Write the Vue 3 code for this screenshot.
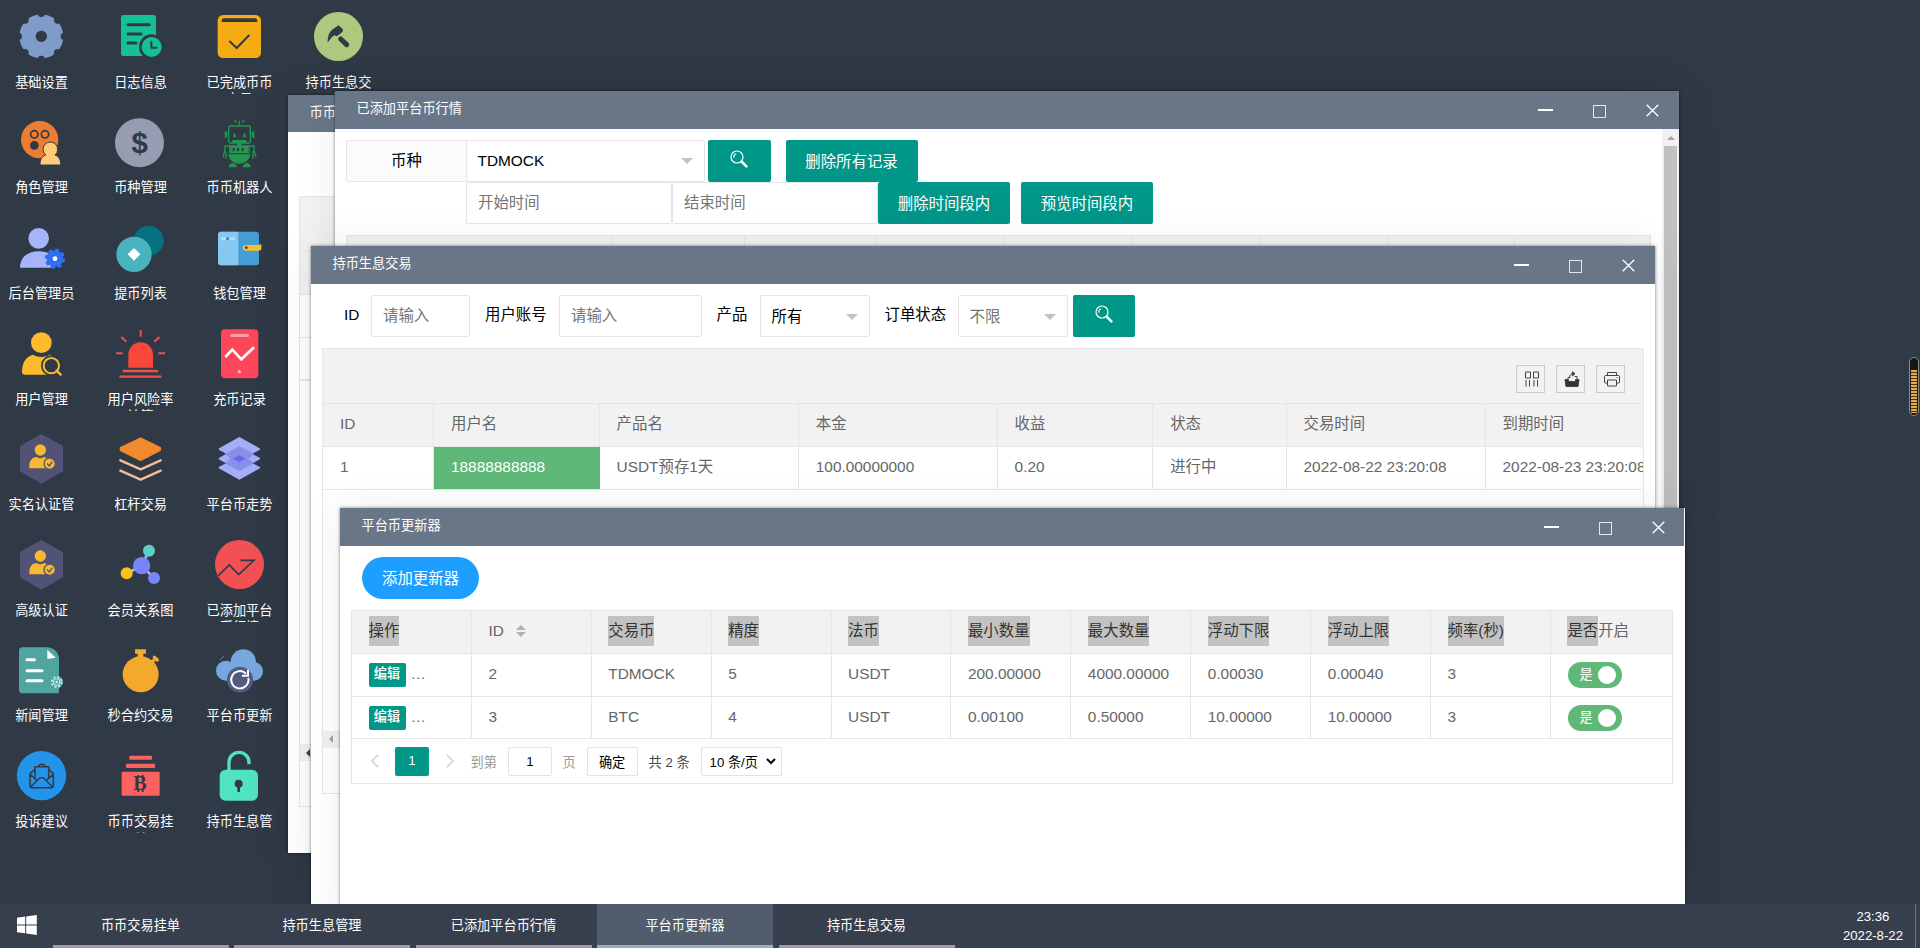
<template>
  <div class="desktop">
    <!-- 桌面图标 -->
    <div class="shortcuts">
      <div v-for="item in shortcuts" :key="item.name" class="shortcut">
        <svg class="shortcut-icon" viewBox="0 0 147 147" v-html="item.svg"></svg>
        <div class="shortcut-name">{{ item.name }}</div>
      </div>
    </div>

    <!-- 币币交易挂单 -->
    <section class="window win-orders">
      <header class="win-title">币币交易挂单</header>
      <div class="win-body orders-body">
        <div class="grid-box orders-grid">
          <div class="orders-tool"></div>
          <div class="orders-head"></div>
          <div class="orders-row"></div>
          <div class="orders-row last"></div>
          <div class="orders-space"></div>
          <div class="hscroll dark"><i></i></div>
        </div>
      </div>
    </section>

    <!-- 已添加平台币行情 -->
    <section class="window win-market">
      <header class="win-title">
        <span>已添加平台币行情</span>
        <span class="win-ctrl"><i class="min"></i><i class="max"></i><svg class="close" viewBox="0 0 13 13"><path d="M.7.7l11.6 11.6M12.3.7L.7 12.3" /></svg></span>
      </header>
      <div class="win-body market-body">
        <div class="market-main">
          <div class="market-row">
            <div class="pane-label">币种</div>
            <div class="select-box market-select">TDMOCK<i class="caret"></i></div>
            <button class="btn btn-search"><svg viewBox="0 0 18 18"><circle cx="7" cy="7" r="6" /><path d="M4 7.6a3.2 3.2 0 0 1 2.2-3.8" /><path class="handle" d="M12 12l4.4 4.4" /></svg></button>
            <button class="btn btn-all">删除所有记录</button>
          </div>
          <div class="market-row second">
            <input class="text-input" placeholder="开始时间" />
            <input class="text-input" placeholder="结束时间" />
            <button class="btn">删除时间段内</button>
            <button class="btn btn-preview">预览时间段内</button>
          </div>
          <div class="grid-box market-grid">
            <div v-for="(w, i) in marketCols" :key="i" class="market-cell" :style="{ width: w + 'px' }"></div>
          </div>
        </div>
        <div class="vscroll"><i></i><b></b></div>
      </div>
    </section>

    <!-- 持币生息交易 -->
    <section class="window win-trade">
      <header class="win-title">
        <span>持币生息交易</span>
        <span class="win-ctrl"><i class="min"></i><i class="max"></i><svg class="close" viewBox="0 0 13 13"><path d="M.7.7l11.6 11.6M12.3.7L.7 12.3" /></svg></span>
      </header>
      <div class="win-body trade-body">
        <div class="trade-form">
          <label class="l-id">ID</label>
          <input class="text-input w-id" placeholder="请输入" />
          <label class="l-user">用户账号</label>
          <input class="text-input w-user" placeholder="请输入" />
          <label class="l-product">产品</label>
          <div class="select-box">所有<i class="caret"></i></div>
          <label class="l-status">订单状态</label>
          <div class="select-box muted">不限<i class="caret"></i></div>
          <button class="btn btn-search"><svg viewBox="0 0 18 18"><circle cx="7" cy="7" r="6" /><path d="M4 7.6a3.2 3.2 0 0 1 2.2-3.8" /><path class="handle" d="M12 12l4.4 4.4" /></svg></button>
        </div>
        <div class="grid-box trade-grid">
          <div class="trade-tool">
            <span class="tool"><svg viewBox="0 0 16 16"><path d="M1.5 1h5v6h-5zM9.5 1h5v6h-5zM2 9v6.5M5.5 9v6.5M10 9v6.5M13.5 9v6.5" /></svg></span>
            <span class="tool"><svg viewBox="0 0 16 16"><path class="solid" d="M1 8.5h3.5v2h7v-2H15L14 15.5H2z" /><path d="M4 8V6.5h2.500M13 8V5.500h-2.500M5.500 6.500C5.500 4 7 3 9 2.800" /><path class="solid" d="M8.300.6L11 2.800 8.300 5z" /></svg></span>
            <span class="tool"><svg viewBox="0 0 16 16"><path d="M3.500 4.500v-3h9v3M3.500 12H1.500c-.6 0-1-.4-1-1V6c0-1 .5-1.500 1.500-1.500h12c1 0 1.500.5 1.500 1.500v5c0 .6-.4 1-1 1h-2M3.500 9h9v6h-9zM12.500 6.700h1" /></svg></span>
          </div>
          <div class="tr th">
            <div v-for="col in tradeCols" :key="col.title" class="td" :style="{ width: col.width + 'px' }">{{ col.title }}</div>
          </div>
          <div class="tr">
            <div v-for="col in tradeCols" :key="col.title" class="td" :class="{ green: col.green }" :style="{ width: col.width + 'px' }">{{ col.value }}</div>
          </div>
          <div class="trade-space"></div>
          <div class="hscroll"><i></i></div>
        </div>
      </div>
    </section>

    <!-- 平台币更新器 -->
    <section class="window win-updater">
      <header class="win-title">
        <span>平台币更新器</span>
        <span class="win-ctrl"><i class="min"></i><i class="max"></i><svg class="close" viewBox="0 0 13 13"><path d="M.7.7l11.6 11.6M12.3.7L.7 12.3" /></svg></span>
      </header>
      <div class="win-body updater-body">
        <button class="btn btn-add">添加更新器</button>
        <div class="grid-box updater-grid">
          <div class="tr th">
            <div class="td"><span class="sel">操作</span></div>
            <div class="td">ID<span class="sort"><i class="asc"></i><i class="desc"></i></span></div>
            <div v-for="t in updaterCols" :key="t" class="td"><span class="sel">{{ t }}</span></div>
            <div class="td"><span class="sel">是否</span>开启</div>
          </div>
          <div v-for="row in updaterRows" :key="row[0]" class="tr">
            <div class="td"><span class="btn-edit">编辑</span><span class="dots">…</span></div>
            <div v-for="(v, i) in row" :key="i" class="td">{{ v }}</div>
            <div class="td"><span class="switch">是<i></i></span></div>
          </div>
          <div class="pager">
            <svg class="arrow" viewBox="0 0 8 14"><path d="M7.200.8L1 7l6.200 6.200" /></svg>
            <span class="page-cur">1</span>
            <svg class="arrow next" viewBox="0 0 8 14"><path d="M.8.8L7 7 .8 13.200" /></svg>
            <span class="skip">到第</span>
            <input class="page-input" value="1" />
            <span class="page-word">页</span>
            <button class="page-btn">确定</button>
            <span class="page-count">共 2 条</span>
            <span class="page-limit">10 条/页<svg viewBox="0 0 10 7"><path d="M1 1l4 4 4-4" /></svg></span>
          </div>
        </div>
      </div>
    </section>

    <!-- 侧边挂件 -->
    <div class="gauge"><i></i></div>

    <!-- 任务栏 -->
    <footer class="taskbar">
      <div class="start">
        <svg viewBox="0 0 20 20"><path d="M0 2.700L8.200 1.600v7.900H0zM9.200 1.450L19.800 0v9.500H9.200zM0 10.400h8.200v7.900L0 17.200zM9.200 10.400h10.600v9.500L9.200 18.450z" /></svg>
      </div>
      <div v-for="t in tasks" :key="t" class="task" :class="{ active: t === activeTask }">{{ t }}</div>
      <div class="clock">
        <div>23:36</div>
        <div>2022-8-22</div>
      </div>
      <div class="show-desktop"></div>
    </footer>
  </div>
</template>

<script setup>
import { ref } from 'vue'

const bg = '#303946'

// 认证图标，两处共用
const certIcon = `<path fill="#515276" d="M73 0l65 36v76l-65 37-64-37V36z"/>
  <circle cx="70" cy="48" r="17" fill="#f9b92f"/>
  <path fill="#f9b92f" d="M37 103v-8c0-16 11-26 22-26 7 5 15 5 22 0 9 1 17 9 19 18v16z"/>
  <circle cx="98" cy="89" r="17" fill="#f9b92f" stroke="#515276" stroke-width="4"/>
  <path d="M90 88l7 8 9-13" fill="none" stroke="#515276" stroke-width="4"/>`

// 齿轮边缘的缺口
const gearNotches = (cx, cy, r, n, size, color) =>
  Array.from({ length: n }, (_, i) => {
    const a = (i * 2 * Math.PI) / n - Math.PI / 2
    return `<circle cx="${(cx + r * Math.cos(a)).toFixed(1)}" cy="${(cy + r * Math.sin(a)).toFixed(1)}" r="${size}" fill="${color}"/>`
  }).join('')

const shortcuts = [
  {
    name: '基础设置',
    svg: `<circle cx="73" cy="73" r="66" fill="#7f9bca"/>${gearNotches(73, 73, 69, 8, 11, bg)}<circle cx="73" cy="73" r="17" fill="${bg}"/>`
  },
  {
    name: '角色管理',
    svg: `<circle cx="68" cy="65" r="56" fill="#ed7d31"/>
      <g fill="none" stroke="${bg}" stroke-width="5"><circle cx="52" cy="49" r="11"/><circle cx="84" cy="49" r="11"/></g>
      <circle cx="52" cy="82" r="13" fill="${bg}"/>
      <path fill="#ffca7a" stroke="${bg}" stroke-width="3" d="M69 141c0-15 4-25 17-30a22 22 0 1 1 28 0c13 5 17 15 17 30z"/>`
  },
  {
    name: '后台管理员',
    svg: `<circle cx="65" cy="46" r="31" fill="#a5b4fb"/>
      <path fill="#a5b4fb" d="M9 134c0-32 24-49 56-49 14 0 28 3 37 10v39z"/>
      <circle cx="114" cy="107" r="25" fill="#2e6ff2"/>
      <circle cx="114" cy="107" r="26" fill="none" stroke="#2e6ff2" stroke-width="9" stroke-dasharray="11.400 9"/>
      <circle cx="114" cy="107" r="7" fill="#fff"/>`
  },
  {
    name: '用户管理',
    svg: `<circle cx="73" cy="41" r="31" fill="#fcbb2d"/>
      <path fill="#fcbb2d" d="M15 130c0-32 14-48 33-53 16 9 34 9 50 0 12 3 22 12 26 26v34H24c-6 0-9-2-9-7z"/>
      <circle cx="103" cy="110" r="24" fill="${bg}" stroke="${bg}" stroke-width="14"/><path d="M118 126l16 17" stroke="${bg}" stroke-width="18"/>
      <circle cx="103" cy="110" r="23" fill="none" stroke="#fcbb2d" stroke-width="6"/><path d="M119 125l12 12" stroke="#fcbb2d" stroke-width="7" stroke-linecap="round"/>`
  },
  { name: '实名认证管理', svg: certIcon },
  { name: '高级认证', svg: certIcon },
  {
    name: '新闻管理',
    svg: `<path fill="#51a5a1" d="M16 4h74c20 0 36 16 36 36v92l-1 10H16c-6 0-10-4-10-10V14C6 8 10 4 16 4z"/>
      <path fill="#fff" d="M91 11l25 24-25 4z"/>
      <path d="M30 41h22M30 74h45M30 104h45" stroke="#fff" stroke-width="9" stroke-linecap="round"/>
      <circle cx="119" cy="108" r="19" fill="#51a5a1"/>
      <circle cx="119" cy="108" r="15" fill="none" stroke="#d8f0ee" stroke-width="5" stroke-dasharray="6 5.800"/><circle cx="119" cy="108" r="10" fill="none" stroke="#d8f0ee" stroke-width="3"/><circle cx="119" cy="108" r="4" fill="#d8f0ee"/>`
  },
  {
    name: '投诉建议',
    svg: `<circle cx="73.5" cy="74" r="74" fill="#2493ea"/>
      <g fill="none" stroke="${bg}" stroke-width="4.500" stroke-linejoin="round"><path d="M54 55L39 68v37c0 3 2 5 5 5h60c3 0 5-2 5-5V68L95 55M39 70l20 17M109 70L89 87M41 108l24-24c5-5 13-5 18 0l24 24"/><path d="M54 84V47h41v37M65 46c2-8 17-8 19 0"/></g>`
  },
  {
    name: '日志信息',
    svg: `<rect x="15" y="9" width="105" height="123" rx="7" fill="#14c197"/>
      <path d="M36 38h64M36 66h39M36 93h24" stroke="${bg}" stroke-width="9" stroke-linecap="round"/>
      <circle cx="107" cy="105" r="38" fill="${bg}"/><circle cx="107" cy="105" r="30" fill="#14c197"/>
      <path d="M106 86v21h18" fill="none" stroke="${bg}" stroke-width="6"/>`
  },
  {
    name: '币种管理',
    svg: `<circle cx="70.500" cy="74" r="73.500" fill="#969db0"/>
      <text x="71" y="104" text-anchor="middle" font-family="Liberation Sans, sans-serif" font-weight="bold" font-size="88" fill="${bg}">$</text>`
  },
  {
    name: '提币列表',
    svg: `<circle cx="98" cy="53" r="45" fill="#05707e"/><circle cx="54" cy="94" r="53" fill="#49b4bf"/>
      <path fill="#fff" d="M54 75l19 19-19 19-19-19z"/>`
  },
  {
    name: '用户风险率计算',
    svg: `<path fill="#fa473b" d="M37 116V77a37 37 0 0 1 74 0v39z"/>
      <path d="M20 126h106M10 143h126" stroke="#ee5148" stroke-width="7"/>
      <path d="M74 3v20M16 24l15 14M130 24l-15 14M0 73h20M127 73h20" stroke="#e8505a" stroke-width="6"/>`
  },
  {
    name: '杠杆交易',
    svg: `<path fill="#f08a2c" d="M74 13l58 29v6l-58 30-60-30v-6z" stroke="#f08a2c" stroke-width="6" stroke-linejoin="round"/>
      <path d="M13 79l61 27 60-27M13 110l61 27 60-27" fill="none" stroke="#f7bd97" stroke-width="7" stroke-linecap="round" stroke-linejoin="round"/>`
  },
  {
    name: '会员关系图',
    svg: `<path d="M99 32L77 77l-45 23M77 77l37 37" stroke="#aab6ee" stroke-width="8" fill="none"/>
      <circle cx="77" cy="77" r="26" fill="#7785fb"/><circle cx="99" cy="32" r="18" fill="#5dcfc8"/>
      <circle cx="32" cy="100" r="18" fill="#fac116"/><circle cx="114" cy="114" r="18" fill="#7785fb"/>`
  },
  {
    name: '秒合约交易',
    svg: `<circle cx="74" cy="85" r="54" fill="#f3a92b"/>
      <path fill="#f3a92b" d="M57 10h33v13h-8v14H65V23h-8z"/><path d="M103 52l16-14" stroke="#f3a92b" stroke-width="10"/><path d="M115 34l9 8" stroke="#f3a92b" stroke-width="10" stroke-linecap="round"/>`
  },
  {
    name: '币币交易挂单',
    svg: `<g fill="#fc6262"><rect x="40" y="14" width="68" height="12" rx="3"/><rect x="30" y="38" width="87" height="13" rx="3"/><rect x="17" y="62" width="114" height="72" rx="3"/></g>
      <path d="M67 72v8M80 72v8M67 114v9M80 114v9" stroke="${bg}" stroke-width="6"/>
      <text x="72" y="117" text-anchor="middle" font-family="Liberation Serif, serif" font-weight="bold" font-size="60" fill="${bg}">B</text>`
  },
  {
    name: '已完成币币交易',
    svg: `<rect x="8" y="9" width="130" height="129" rx="16" fill="#f5ac12"/>
      <path fill="${bg}" d="M20 30v-4c0-4 3-7 7-7h93c4 0 7 3 7 7v4z"/>
      <path d="M43 87l22 21 38-39" fill="none" stroke="${bg}" stroke-width="6"/>`
  },
  {
    name: '币币机器人',
    svg: `<g fill="none" stroke="#22974f" stroke-width="4"><rect x="41" y="24" width="65" height="51" rx="5"/><path d="M73 23V8M64 14l-5-8M82 14l5-8M31 40v20M116 40v20M35 42v16M112 42v16M30 84h87M44 84v20h58V84M30 82v14l-6 22M117 82v14l6 22M33 100v22M114 100v22"/></g>
      <g fill="#22974f"><rect x="55" y="47" width="7" height="11"/><rect x="85" y="47" width="7" height="11"/><path d="M52 66h42v9H52zM66 76h14v9H66zM46 84h54v20H46z"/><path d="M40 109h66c-4 19-16 28-33 28s-29-9-33-28z"/><path d="M40 148c2-8 8-13 14-13s10 5 12 13zM82 148c2-8 8-13 14-13s10 5 12 13z"/></g>
      <path d="M53 90h6v10h-6zM66 90h6v10h-6zM80 90h6v10h-6z" fill="${bg}"/>`
  },
  {
    name: '钱包管理',
    svg: `<rect x="9" y="26" width="123" height="101" rx="9" fill="#459dd6"/>
      <path fill="#87c8f0" d="M18 26h52v101H18c-5 0-9-4-9-9V35c0-5 4-9 9-9z"/>
      <path d="M22 47h34" stroke="#b5e0fa" stroke-width="9" stroke-linecap="round"/><circle cx="38" cy="47" r="5" fill="#4b7fb0"/>
      <path fill="#fbbf2c" d="M92 66h40l7-3v17l-7 3H92a8 8 0 0 1 0-17z"/><circle cx="94" cy="74" r="4" fill="${bg}"/>`
  },
  {
    name: '充币记录',
    svg: `<rect x="18" y="1" width="112" height="147" rx="12" fill="#fd4659"/>
      <rect x="46" y="15" width="56" height="9" rx="4" fill="#ffa0aa"/>
      <path d="M31 84l21-22 27 29 38-36" fill="none" stroke="#fff" stroke-width="8"/><circle cx="73" cy="128" r="5" fill="#ffb3bb"/>`
  },
  {
    name: '平台币走势',
    svg: `<g fill="#a4adf7" stroke="#a4adf7" stroke-width="6" stroke-linejoin="round"><path d="M73 70l59 31-59 33-59-33zM73 42l59 32-59 32-59-32zM73 12l59 33-59 32-59-32z"/></g>
      <path fill="#8790e6" d="M73 37l44 22-17 15 17 14-44 23-44-23 17-14-17-15z"/><path fill="#626bf0" d="M73 64l19 10-19 10-19-10z"/>`
  },
  {
    name: '已添加平台币行情',
    svg: `<circle cx="73.500" cy="73.500" r="73.500" fill="#f25153"/>
      <path d="M10 107l33-32 28 29 46-43H76" fill="none" stroke="${bg}" stroke-width="5"/>`
  },
  {
    name: '平台币更新器',
    svg: `<g fill="#76a7df"><circle cx="85" cy="48" r="38"/><circle cx="33" cy="74" r="30"/><circle cx="116" cy="76" r="28"/><path d="M33 50h80v54H33z"/></g>
      <path d="M14 42l14-12" stroke="#76a7df" stroke-width="2"/>
      <circle cx="75" cy="101" r="39" fill="#525b80"/>
      <path d="M100 96a26 26 0 1 1-7-13M99 71v18H81" fill="none" stroke="#fff" stroke-width="6"/>`
  },
  {
    name: '持币生息管理',
    svg: `<rect x="14" y="56" width="115" height="93" rx="18" fill="#4fe3c1"/>
      <path d="M42 60V34a30 30 0 0 1 60 0v6" fill="none" stroke="#4fe3c1" stroke-width="10"/>
      <circle cx="71" cy="98" r="12" fill="${bg}"/><path d="M71 100v20" stroke="${bg}" stroke-width="8" stroke-linecap="round"/>`
  },
  {
    name: '持币生息交易',
    svg: `<circle cx="73.500" cy="73.500" r="73.500" fill="#aec97f"/>
      <path fill="${bg}" d="M41 92c0-18 4-32 16-41l17-11 13 12-1 7-17 14-8-3c-9 6-14 14-20 22z"/>
      <path d="M80 81l18 17" stroke="${bg}" stroke-width="15" stroke-linecap="round"/><path d="M66 80l20-18" stroke="#aec97f" stroke-width="4"/>`
  }
]

// 行情表各列宽度
const marketCols = [265.4, 132.4, 132.6, 128, 127.6, 127.4, 127.5, 127.6, 132.5]

const tradeCols = [
  { title: 'ID', value: '1', width: 111 },
  { title: '用户名', value: '18888888888', width: 165.6, green: true },
  { title: '产品名', value: 'USDT预存1天', width: 199.2 },
  { title: '本金', value: '100.00000000', width: 198.8 },
  { title: '收益', value: '0.20', width: 155.6 },
  { title: '状态', value: '进行中', width: 133.4 },
  { title: '交易时间', value: '2022-08-22 23:20:08', width: 199 },
  { title: '到期时间', value: '2022-08-23 23:20:08', width: 199 }
]

const updaterCols = ['交易币', '精度', '法币', '最小数量', '最大数量', '浮动下限', '浮动上限', '频率(秒)']
const updaterRows = [
  ['2', 'TDMOCK', '5', 'USDT', '200.00000', '4000.00000', '0.00030', '0.00040', '3'],
  ['3', 'BTC', '4', 'USDT', '0.00100', '0.50000', '10.00000', '10.00000', '3']
]

const tasks = ['币币交易挂单', '持币生息管理', '已添加平台币行情', '平台币更新器', '持币生息交易']
const activeTask = ref('平台币更新器')
</script>

<style>
body {
  margin: 0;
  overflow: hidden;
}
</style>

<style scoped>
.desktop {
  position: relative;
  width: 1920px;
  height: 948px;
  overflow: hidden;
  background: #303946;
  font-family: "Liberation Sans", "Noto Sans CJK SC", sans-serif;
  font-size: 15.4px;
  color: #666;
}

.desktop * {
  box-sizing: border-box;
}

button,
input {
  font-family: inherit;
  font-size: 15.4px;
  margin: 0;
}

/* 桌面图标 */
.shortcuts {
  display: grid;
  grid-auto-flow: column;
  grid-template-rows: repeat(8, 105.6px);
  grid-auto-columns: 99px;
  justify-content: start;
  padding-top: 12px;
  margin-left: -8px;
}

.shortcut {
  display: flex;
  flex-direction: column;
  align-items: center;
}

.shortcut-icon {
  width: 49px;
  height: 49px;
  flex-shrink: 0;
  overflow: visible;
}

.shortcut-name {
  width: 70px;
  height: 20px;
  margin-top: 12.800px;
  overflow: hidden;
  text-align: center;
  font-size: 13.2px;
  line-height: 17.600px;
  color: #fff;
}

/* 窗口 */
.window {
  position: absolute;
  display: flex;
  flex-direction: column;
  background: #fff;
  box-shadow: 0 0 3px rgba(0, 0, 0, 0.5), 1px 1px 40px rgba(0, 0, 0, 0.08);
}

.win-title {
  display: flex;
  justify-content: space-between;
  height: 38px;
  flex-shrink: 0;
  padding-left: 21.500px;
  background: #687688;
  color: #fff;
  font-size: 13.2px;
  line-height: 36px;
  white-space: nowrap;
  overflow: hidden;
}

.win-ctrl {
  display: flex;
  align-items: center;
  gap: 40px;
  padding-right: 20px;
}

.win-ctrl .min {
  width: 15px;
  height: 2px;
  background: #fff;
}

.win-ctrl .max {
  width: 13px;
  height: 13px;
  margin-top: 2px;
  border: 1px solid #e3e8ee;
}

.win-ctrl .close {
  width: 13px;
  height: 13px;
  margin-top: 1px;
  fill: none;
  stroke: #fff;
  stroke-width: 1.3;
}

.win-body {
  flex: 1;
  min-height: 0;
  overflow: hidden;
}

.grid-box {
  border: 1px solid #e6e6e6;
}

.win-orders {
  left: 288px;
  top: 95px;
  width: 1344px;
  height: 758px;
}

.win-orders .win-title {
  height: 37px;
}

.orders-body {
  padding: 64px 11px 0;
}

.orders-tool {
  height: 55px;
  background: #f2f2f2;
  border-bottom: 1px solid #e6e6e6;
}

.orders-head {
  height: 43px;
  background: #f2f2f2;
  border-bottom: 1px solid #e6e6e6;
}

.orders-row {
  height: 43px;
  border-bottom: 1px solid #e6e6e6;
}

.orders-row.last {
  border-bottom-width: 2px;
}

.orders-space {
  height: 363px;
}

.orders-grid {
  height: 611px;
}

.hscroll {
  height: 17px;
  background: #f1f1f1;
  display: flex;
  align-items: center;
}

.hscroll i {
  margin-left: 6px;
  border: 4px solid transparent;
  border-left: 0;
  border-right-color: #a3a3a3;
}

.hscroll.dark i {
  border-right-color: #404040;
}

.win-market {
  left: 335px;
  top: 91px;
  width: 1344px;
  height: 760px;
}

.market-body {
  display: flex;
}

.market-main {
  flex: 1;
  min-width: 0;
  padding: 11px 0 0 11px;
}

.market-row {
  display: flex;
  height: 42px;
}

.market-row.second {
  padding-left: 120px;
}

.pane-label {
  width: 121px;
  border: 1px solid #e6e6e6;
  border-radius: 2px 0 0 2px;
  background: #fbfbfb;
  color: #000;
  text-align: center;
  line-height: 40px;
}

.select-box {
  display: flex;
  align-items: center;
  justify-content: space-between;
  width: 110px;
  height: 42px;
  padding: 0 11px 0 10.500px;
  border: 1px solid #e6e6e6;
  border-radius: 2px;
  background: #fff;
  color: #000;
}

.select-box.muted {
  color: #757575;
}

.market-select {
  width: 239px;
  margin: 0 3px 0 -1px;
}

.trade-form .select-box {
  padding-top: 2px;
}

.caret {
  border: 6.600px solid transparent;
  border-top-color: #c2c2c2;
  border-bottom: 0;
}

.text-input {
  width: 206px;
  height: 42px;
  padding: 0 0 0 11px;
  border: 1px solid #e6e6e6;
  border-radius: 2px;
  outline: none;
  background: #fff;
}

.text-input::placeholder {
  color: #757575;
  opacity: 1;
}

.btn {
  width: 132px;
  height: 42px;
  padding: 0 0 2px;
  border: 0;
  border-radius: 2px;
  background: #009688;
  color: #fff;
  white-space: nowrap;
}

.btn-search {
  width: 62.500px;
}

.trade-form .btn-search {
  width: 62px;
}

.btn-search svg {
  width: 18px;
  height: 18px;
  margin-bottom: 3px;
  vertical-align: middle;
  fill: none;
  stroke: #fff;
  stroke-width: 1.2;
}

.btn-search .handle {
  stroke-width: 2.6;
  stroke-linecap: round;
}

.btn-all {
  margin-left: 15px;
}

.btn-preview {
  margin-left: 11px;
}

.market-grid {
  display: flex;
  width: 1304.500px;
  height: 500px;
  margin-top: 11px;
  background: #f2f2f2;
}

.market-cell {
  flex-shrink: 0;
  border-right: 1px solid #e6e6e6;
}

.market-cell:last-child {
  border-right: 0;
}

.vscroll {
  display: flex;
  flex-direction: column;
  align-items: center;
  width: 17px;
  background: #f1f1f1;
}

.vscroll i {
  margin: 7px 0 6px;
  border: 4px solid transparent;
  border-top: 0;
  border-bottom-color: #a3a3a3;
}

.vscroll b {
  width: 13px;
  height: 600px;
  background: #c1c1c1;
}

.win-trade {
  left: 311px;
  top: 246px;
  width: 1344px;
  height: 690px;
}

.trade-body {
  padding: 11px 11px 0;
}

.trade-form {
  display: flex;
  height: 42px;
  line-height: 40px;
  color: #000;
}

.trade-form .w-id {
  width: 99px;
}

.trade-form .w-user {
  width: 143px;
}

.l-id {
  width: 49px;
  padding-left: 22px;
}

.l-user {
  width: 89px;
  padding-left: 15px;
}

.l-product {
  width: 58px;
  padding-left: 14.500px;
}

.l-status {
  width: 88px;
  padding-left: 14.500px;
}

.trade-form .btn {
  margin-left: 5px;
}

.trade-grid {
  width: 1322px;
  height: 446px;
  margin-top: 11px;
  overflow: hidden;
}

.trade-tool {
  display: flex;
  justify-content: flex-end;
  align-items: center;
  gap: 11px;
  height: 55px;
  padding: 5px 18px 0 0;
  background: #f2f2f2;
  border-bottom: 1px solid #e6e6e6;
}

.tool {
  display: flex;
  align-items: center;
  justify-content: center;
  width: 29px;
  height: 28px;
  padding-left: 2px;
  border: 1px solid #ccc;
}

.tool svg {
  width: 16px;
  height: 16px;
  fill: none;
  stroke: #444;
  stroke-width: 1;
}

.tool .solid {
  fill: #333;
}

.tr {
  display: flex;
  height: 43px;
  border-bottom: 1px solid #e6e6e6;
}

.th {
  background: #f2f2f2;
}

.td {
  flex-shrink: 0;
  padding: 0 0 0 17px;
  border-right: 1px solid #e6e6e6;
  line-height: 40px;
  white-space: nowrap;
}

.td.green {
  background: #5fb878;
  border-right-color: #5fb878;
  color: #fff;
}

.trade-space {
  height: 240.500px;
}

.win-updater {
  left: 340px;
  top: 508px;
  width: 1345px;
  height: 420px;
}

.win-updater .win-title {
  margin-right: 1px;
}

.win-updater .win-ctrl {
  padding-right: 19px;
}

.updater-body {
  padding: 11px;
}

.btn-add {
  display: block;
  width: 117px;
  margin-left: 11px;
  border-radius: 21px;
  background: #1e9fff;
}

.updater-grid {
  width: 1322px;
  margin-top: 11px;
}

.updater-grid .td {
  display: flex;
  align-items: center;
  width: 119.900px;
  padding-left: 16.500px;
  padding-bottom: 3px;
  line-height: 30px;
}

.updater-grid .td:last-child {
  border-right: 0;
}

.updater-grid .tr:not(.th) .td {
  padding-bottom: 2px;
}

.updater-grid .tr:nth-child(3) {
  height: 42px;
}

.updater-grid .tr:nth-child(3) .td {
  padding-bottom: 1px;
}

.sel {
  height: 30px;
  background: #c2c2c2;
  color: #333;
}

.sort {
  display: flex;
  flex-direction: column;
  gap: 2px;
  margin-left: 12px;
}

.sort i {
  border: 5.500px solid transparent;
}

.sort .asc {
  border-top: 0;
  border-bottom-color: #b2b2b2;
}

.sort .desc {
  border-bottom: 0;
  border-top-color: #b2b2b2;
}

.btn-edit {
  width: 37px;
  height: 24px;
  margin-top: 1px;
  border-radius: 2px;
  background: #009688;
  color: #fff;
  font-size: 13.2px;
  font-weight: 500;
  line-height: 22px;
  text-align: center;
}

.dots {
  margin-left: 5px;
}

.switch {
  display: flex;
  align-items: center;
  justify-content: space-between;
  width: 54px;
  height: 26px;
  margin: 2px 0 0 1px;
  padding: 0 6px 0 11px;
  border-radius: 13px;
  background: #5fb878;
  color: #fff;
  font-size: 13.2px;
}

.switch i {
  width: 18px;
  height: 18px;
  border-radius: 50%;
  background: #fff;
}

/* 分页 */
.pager {
  display: flex;
  align-items: center;
  height: 44px;
  padding-left: 19px;
  font-size: 13.2px;
}

.arrow {
  width: 8px;
  height: 14px;
  fill: none;
  stroke: #d2d2d2;
  stroke-width: 1.6;
}

.page-cur {
  width: 34px;
  height: 29px;
  margin: 0 17px 0 16px;
  border-radius: 2px;
  background: #009688;
  color: #fff;
  text-align: center;
  line-height: 28px;
}

.skip {
  margin-left: 16.500px;
  color: #999;
}

.page-input {
  width: 44px;
  height: 29px;
  margin: 0 10.500px 0 11px;
  padding: 0;
  border: 1px solid #e2e2e2;
  border-radius: 2px;
  text-align: center;
  font-size: 13.2px;
}

.page-word {
  color: #999;
}

.page-btn {
  width: 51px;
  height: 29px;
  margin: 0 11px;
  padding: 0;
  border: 1px solid #e2e2e2;
  border-radius: 2px;
  background: #fff;
  font-size: 13.2px;
}

.page-count {
  width: 52px;
  color: #444;
}

.page-limit {
  display: flex;
  align-items: center;
  justify-content: space-between;
  width: 81px;
  height: 29px;
  padding: 0 5px 0 8px;
  border: 1px solid #e2e2e2;
  border-radius: 2px;
  color: #000;
}

.page-limit svg {
  width: 10px;
  height: 7px;
  fill: none;
  stroke: #000;
  stroke-width: 2;
}

/* 右侧挂件 */
.gauge {
  position: absolute;
  left: 1909px;
  top: 357px;
  display: flex;
  align-items: flex-end;
  justify-content: center;
  width: 10px;
  height: 59px;
  padding-bottom: 2px;
  border: 1px solid #8d8d8d;
  border-radius: 5px;
  background: #14161a;
}

.gauge i {
  width: 6px;
  height: 43px;
  background: repeating-linear-gradient(#e8a94a 0 2px, #4a3415 2px 3px);
}

/* 任务栏 */
.taskbar {
  position: absolute;
  left: 0;
  right: 0;
  bottom: 0;
  display: flex;
  height: 44px;
  background: #373f4d;
  color: #fff;
  font-size: 13.2px;
}

.start {
  width: 52.500px;
  padding: 11px 0 0 17px;
}

.start svg {
  width: 20px;
  height: 20px;
  fill: #fff;
}

.task {
  width: 176px;
  margin-right: 5.500px;
  border-bottom: 3px solid #9a9da5;
  line-height: 43px;
  text-align: center;
}

.task.active {
  background: #515d6c;
  border-bottom-color: #a3abb9;
}

.clock {
  margin-left: auto;
  padding-top: 2.500px;
  text-align: center;
  line-height: 19px;
}

.show-desktop {
  width: 5px;
  margin-left: 12px;
  border-left: 1px solid #6f7783;
}
</style>
